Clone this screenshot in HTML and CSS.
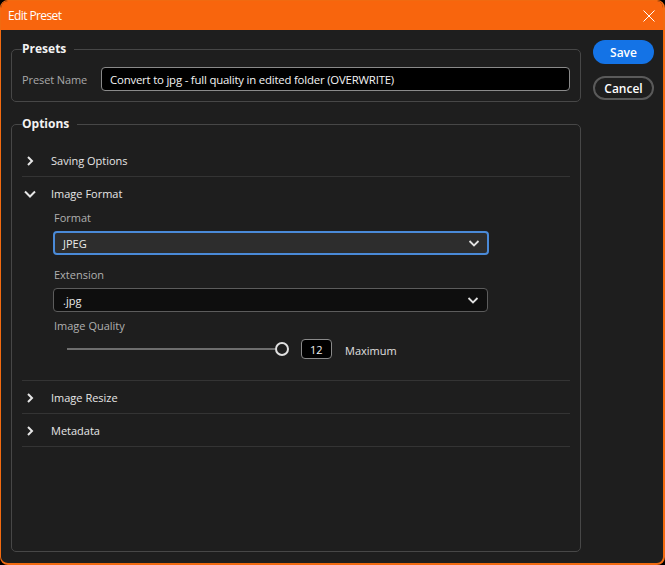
FILE: index.html
```html
<!DOCTYPE html>
<html>
<head>
<meta charset="utf-8">
<link rel="stylesheet" href="styles.css">
</head>
<body>
<div class="window">
  <div class="titlebar">
    <span class="title">Edit Preset</span>
    <svg class="close" width="14" height="14" viewBox="0 0 14 14"><path d="M1.5 1.5L12.5 12.5M12.5 1.5L1.5 12.5" stroke="#fff" stroke-width="1" fill="none"/></svg>
  </div>
  <div class="content">
    <div class="main">
      <fieldset class="group presets">
        <legend>Presets</legend>
        <div class="name-row">
          <span class="label">Preset Name</span>
          <div class="text-input">Convert to jpg - full quality in edited folder (OVERWRITE)</div>
        </div>
      </fieldset>
      <fieldset class="group options">
        <legend>Options</legend>
        <div class="section">
          <div class="section-head">
            <svg class="chev" width="12" height="12" viewBox="0 0 12 12"><path d="M4 2L8 6L4 10" stroke="#e6e6e6" stroke-width="2" fill="none"/></svg>
            <span>Saving Options</span>
          </div>
        </div>
        <div class="section open">
          <div class="section-head">
            <svg class="chev" width="12" height="12" viewBox="0 0 12 12"><path d="M1 3.5L6 8.5L11 3.5" stroke="#e6e6e6" stroke-width="2" fill="none"/></svg>
            <span>Image Format</span>
          </div>
          <div class="section-body">
            <div class="field-label">Format</div>
            <div class="select focused">
              <span>JPEG</span>
              <svg width="12" height="10" viewBox="0 0 12 10"><path d="M1.5 3L6 7.5L10.5 3" stroke="#e0e0e0" stroke-width="1.8" fill="none"/></svg>
            </div>
            <div class="field-label gap">Extension</div>
            <div class="select dark">
              <span>.jpg</span>
              <svg width="12" height="10" viewBox="0 0 12 10"><path d="M1.5 3L6 7.5L10.5 3" stroke="#e0e0e0" stroke-width="1.8" fill="none"/></svg>
            </div>
            <div class="field-label gap2">Image Quality</div>
            <div class="slider-row">
              <div class="track"></div>
              <div class="thumb"></div>
              <div class="num">12</div>
              <span class="max">Maximum</span>
            </div>
          </div>
        </div>
        <div class="section">
          <div class="section-head">
            <svg class="chev" width="12" height="12" viewBox="0 0 12 12"><path d="M4 2L8 6L4 10" stroke="#e6e6e6" stroke-width="2" fill="none"/></svg>
            <span>Image Resize</span>
          </div>
        </div>
        <div class="section">
          <div class="section-head">
            <svg class="chev" width="12" height="12" viewBox="0 0 12 12"><path d="M4 2L8 6L4 10" stroke="#e6e6e6" stroke-width="2" fill="none"/></svg>
            <span>Metadata</span>
          </div>
        </div>
      </fieldset>
    </div>
    <div class="side">
      <button class="btn save">Save</button>
      <button class="btn cancel">Cancel</button>
    </div>
  </div>
</div>
</body>
</html>
```
FILE: styles.css
```css
* { box-sizing: border-box; }
html, body { margin: 0; padding: 0; background: #000; }
body {
  font-family: "Open Sans", "Noto Sans", sans-serif;
  font-size: 11px;
  color: #e8e8e8;
}
.window {
  width: 665px;
  height: 565px;
  background: #1e1e1e;
  border: 1px solid #f26a10;
  border-right-width: 2px;
  border-bottom-width: 2px;
  border-radius: 8px;
  overflow: hidden;
  display: flex;
  flex-direction: column;
}
.titlebar {
  height: 29px;
  background: #f8650d;
  display: flex;
  align-items: center;
  justify-content: space-between;
  padding: 0 7px 0 7px;
  flex-shrink: 0;
}
.title { color: #fff; font-size: 12px; letter-spacing: -0.6px; }
.content {
  display: flex;
  padding: 10px 9px 0 10px;
  gap: 12px;
  flex: 1;
}
.main { width: 570px; display: flex; flex-direction: column; }
.group {
  margin: 0;
  border: 1px solid #474747;
  border-radius: 5px;
  padding: 0 10px;
}
.group legend {
  font-weight: 700;
  font-size: 12px;
  color: #f2f2f2;
  padding: 0 8px 0 0;
  margin-left: 0;
  line-height: 18px;
}
.presets { padding-top: 9px; padding-bottom: 10px; }
.name-row { display: flex; align-items: center; }
.label { color: #a8a8a8; width: 79px; letter-spacing: -0.1px; }
.text-input {
  flex: 1;
  height: 24px;
  background: #000;
  border: 1px solid #8a8a8a;
  border-radius: 4px;
  padding: 0 8px;
  display: flex;
  align-items: center;
  color: #f4f4f4;
  font-size: 11.4px;
  letter-spacing: -0.2px;
  white-space: nowrap;
}
.options { margin-top: 13px; height: 437px; padding-top: 11px; }
.section { border-bottom: 1px solid #343434; }
.section-head {
  height: 32px;
  display: flex;
  align-items: center;
  color: #e6e6e6;
  padding-top: 1px;
}
.chev { margin-left: 2px; margin-right: 15px; }
.section-body { padding: 0 81px 21px 31px; }
.field-label { color: #b0b0b0; line-height: 17px; margin-bottom: 5px; padding-left: 1px; }
.field-label.gap { margin-top: 11px; }
.field-label.gap2 { margin-top: 5px; }
.select {
  height: 24px;
  border-radius: 4px;
  display: flex;
  align-items: center;
  justify-content: space-between;
  padding: 0 7px 0 8px;
  color: #eaeaea;
}
.select.focused { background: #2d2d2d; border: 2px solid #4a8ad8; }
.select.dark { background: #0e0e0e; border: 1px solid #5c5c5c; width: 435px; padding-left: 9px; padding-right: 8px; }
.slider-row {
  display: flex;
  align-items: center;
  height: 20px;
  margin-top: 2px;
  padding-left: 14px;
}
.track { width: 208px; height: 2px; background: #6e6e6e; }
.thumb {
  width: 14px;
  height: 14px;
  border: 2px solid #e0e0e0;
  border-radius: 50%;
}
.num {
  margin-left: 12px;
  width: 31px;
  height: 20px;
  background: #000;
  border: 1px solid #8a8a8a;
  border-radius: 4px;
  display: flex;
  align-items: center;
  padding-left: 8px;
  font-size: 11px;
  color: #f0f0f0;
}
.max { margin-left: 13px; color: #e0e0e0; padding-top: 2px; }
.side { display: flex; flex-direction: column; gap: 12px; }
.btn {
  width: 61px;
  height: 24px;
  border-radius: 12px;
  font-family: "Open Sans", "Noto Sans", sans-serif;
  font-size: 12px;
  font-weight: 600;
  color: #fff;
  padding: 0;
  cursor: default;
}
.save { background: #1473e6; border: none; }
.cancel { background: transparent; border: 2px solid #5a5a5a; }
```
